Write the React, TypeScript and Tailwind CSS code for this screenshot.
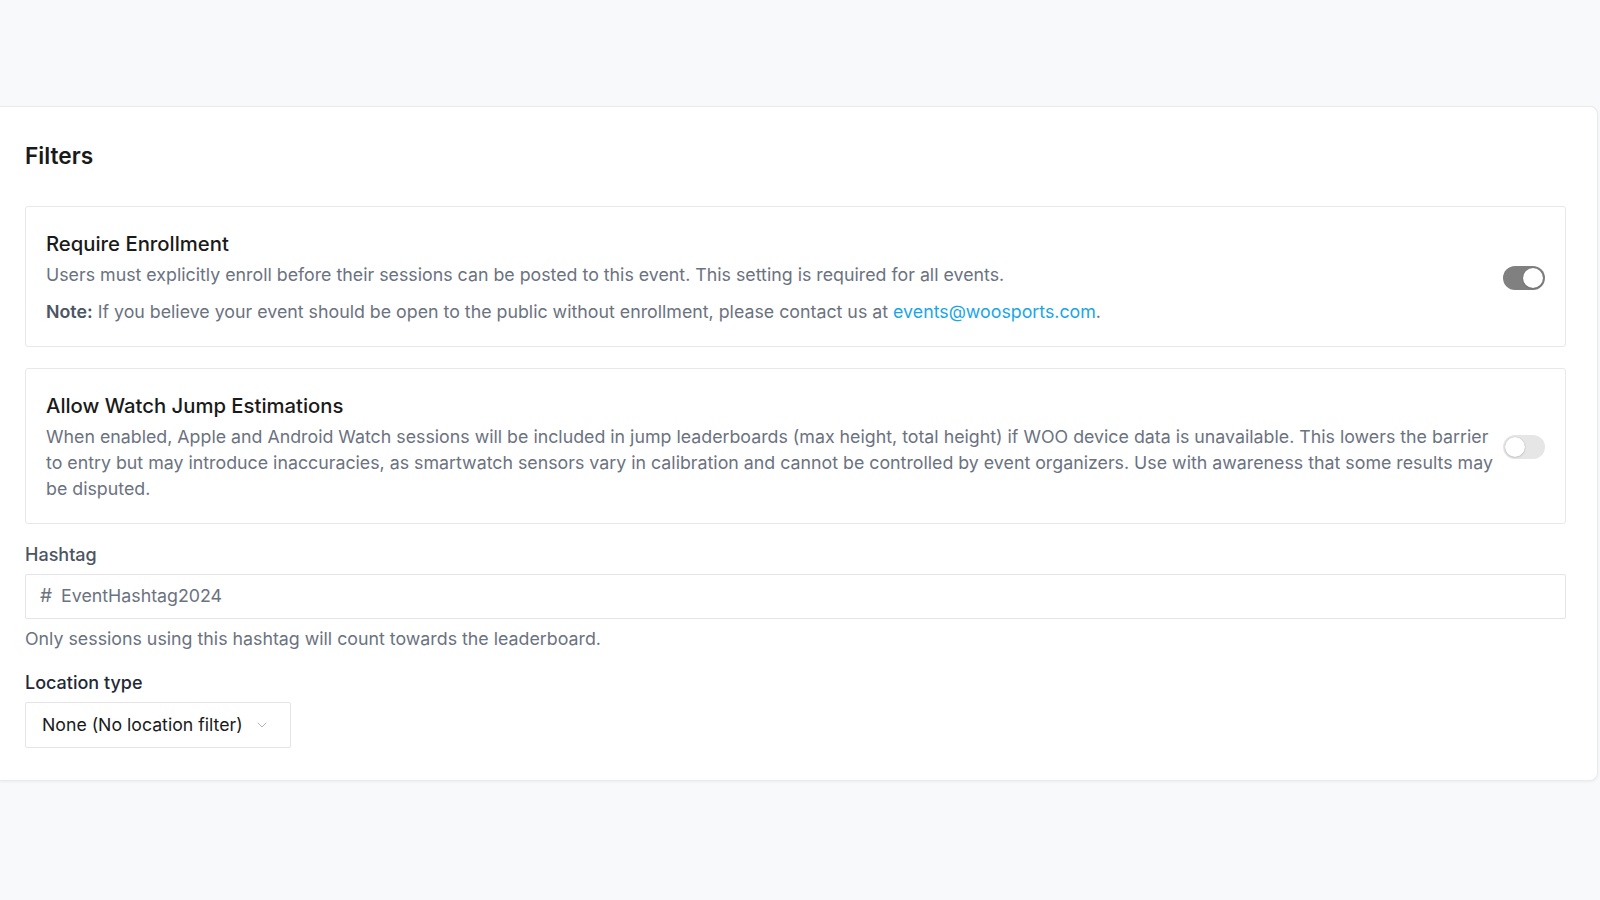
import { ChevronDown } from "lucide-react";

function Toggle({ on }: { on: boolean }) {
  return (
    <div
      className={
        on
          ? "flex h-[24px] w-[42px] shrink-0 items-center justify-end rounded-full bg-[#808080] p-[2px]"
          : "flex h-[24px] w-[42px] shrink-0 items-center justify-start rounded-full bg-[#e6e6e6] p-[2px]"
      }
    >
      <div className="h-[20px] w-[20px] rounded-full bg-white shadow-[0_0_1px_rgba(0,0,0,0.3),0_1px_2px_rgba(0,0,0,0.1)]" />
    </div>
  );
}

function SettingCard({
  title,
  on,
  children,
}: {
  title: string;
  on: boolean;
  children: React.ReactNode;
}) {
  return (
    <div className="flex items-center gap-[8px] rounded-[3px] border border-[#e8e8ea] bg-white pb-[21px] pl-5 pr-5 pt-[23px]">
      <div className="flex-1">
        <div className="text-[20.3px] font-medium leading-[28px] text-[#1a1a1a]">{title}</div>
        <div className="mt-[4px] text-[17.8px] leading-[26px] text-[#6b7280]">{children}</div>
      </div>
      <Toggle on={on} />
    </div>
  );
}

export default function App() {
  return (
    <div
      className="min-h-screen bg-[#f8f9fa] pt-[106px]"
      style={{ fontFamily: "Inter, 'Noto Sans', sans-serif" }}
    >
      <div className="mr-[2px] rounded-r-lg border border-l-0 border-[#e9eaec] bg-white pb-[32px] pl-[25px] pr-[31px] pt-[33px] shadow-[0_1px_3px_rgba(0,0,0,0.05)]">
        <h2 className="text-[22.7px] font-semibold leading-[32px] text-[#1a1a1a]">Filters</h2>

        <div className="mt-[34px] flex flex-col gap-[21px]">
          <SettingCard title="Require Enrollment" on>
            <p>
              Users must explicitly enroll before their sessions can be posted to this event. This
              setting is required for all events.
            </p>
            <p className="mt-[11px]">
              <span className="font-semibold text-[#4b5563]">Note:</span> If you believe your event
              should be open to the public without enrollment, please contact us at{" "}
              <span className="text-[#19a6e8]">events@woosports.com</span>.
            </p>
          </SettingCard>

          <SettingCard title="Allow Watch Jump Estimations" on={false}>
            <p>
              When enabled, Apple and Android Watch sessions will be included in jump leaderboards
              (max height, total height) if WOO device data is unavailable. This lowers the barrier
              to entry but may introduce inaccuracies, as smartwatch sensors vary in calibration and
              cannot be controlled by event organizers. Use with awareness that some results may be
              disputed.
            </p>
          </SettingCard>
        </div>

        <div className="mt-[19px]">
          <div className="text-[18px] font-medium leading-[24px] text-[#4b5563]">Hashtag</div>
          <div className="mt-[7px] flex h-[45px] items-center rounded-[2px] border border-[#e5e5e7] bg-white pl-[14px]">
            <span className="text-[19px] text-[#6b7280]">#</span>
            <span className="ml-[9px] text-[17.8px] text-[#6b7280]">EventHashtag2024</span>
          </div>
          <div className="mt-[7px] text-[17.8px] leading-[26px] text-[#6b7280]">
            Only sessions using this hashtag will count towards the leaderboard.
          </div>
        </div>

        <div className="mt-[19px]">
          <div className="text-[18px] font-medium leading-[24px] text-[#1f2937]">Location type</div>
          <div className="mt-[7px] flex h-[46px] w-[266px] items-center justify-between rounded-[2px] border border-[#e5e5e7] bg-white pl-4 pr-[20px]">
            <span className="text-[17.7px] text-[#1a1a1a]">None (No location filter)</span>
            <ChevronDown className="h-[16px] w-[16px] text-[#b0b4ba]" strokeWidth={1.5} />
          </div>
        </div>
      </div>
    </div>
  );
}
